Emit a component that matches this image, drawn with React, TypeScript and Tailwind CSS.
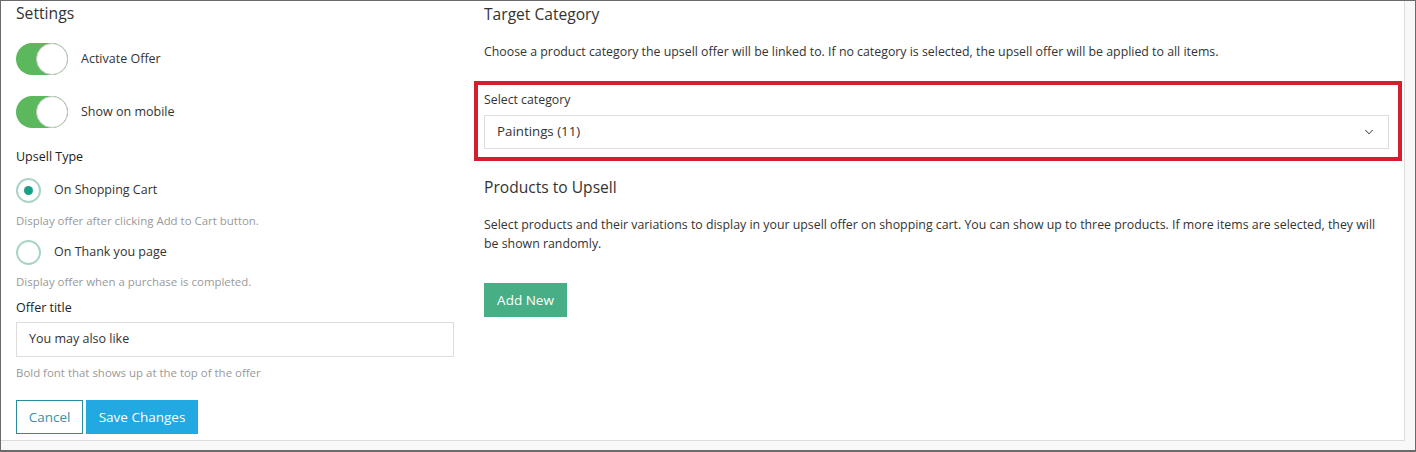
import { ChevronDown } from 'lucide-react';

const font = { fontFamily: '"Open Sans", "Noto Sans", Arial, sans-serif' };

function Toggle({ label }: { label: string }) {
  return (
    <div className="flex h-[32px] items-center">
      <div className="relative h-[32px] w-[52px] rounded-full bg-[#5cb85c]">
        <div className="absolute right-0 top-0 h-[32px] w-[32px] rounded-full border border-[#c8c8c8] bg-white" />
      </div>
      <span className="ml-[13px] text-[12.5px] text-[#333]">{label}</span>
    </div>
  );
}

function Radio({ label, checked }: { label: string; checked?: boolean }) {
  return (
    <div className="flex h-[25px] items-center">
      <div className="flex h-[25px] w-[25px] items-center justify-center rounded-full border-2 border-[#a9d3c8] bg-white">
        {checked && <div className="h-[9px] w-[9px] rounded-full bg-[#17a085]" />}
      </div>
      <span className="ml-[13px] text-[12.5px] text-[#333]">{label}</span>
    </div>
  );
}

export default function App() {
  return (
    <div className="h-[452px] w-[1416px] border border-b-2 border-[#6a6a6a] bg-[#f8f8f8] text-[#333]" style={font}>
      <div className="flex h-[440px] w-[1404px] border-b border-r border-[#dcdcdc] bg-white">
        {/* Settings column */}
        <div className="w-[453px] pl-[15px] pt-[1px]">
          <h2 className="text-[15.7px] leading-[22px] text-[#333]">Settings</h2>
          <div className="mt-[19px] flex flex-col gap-[21px]">
            <Toggle label="Activate Offer" />
            <Toggle label="Show on mobile" />
          </div>
          <div className="mt-[20px] text-[12.5px] leading-[18px] text-[#222]">Upsell Type</div>
          <div className="mt-[12px]">
            <Radio label="On Shopping Cart" checked />
          </div>
          <div className="mt-[10px] text-[11.45px] leading-[16px] text-[#999]">Display offer after clicking Add to Cart button.</div>
          <div className="mt-[11px]">
            <Radio label="On Thank you page" />
          </div>
          <div className="mt-[9px] text-[11.45px] leading-[16px] text-[#999]">Display offer when a purchase is completed.</div>
          <div className="mt-[9px] text-[12.5px] leading-[18px] text-[#222]">Offer title</div>
          <div className="mt-[5px] flex h-[35px] w-[438px] items-center border border-[#ddd] px-[12px] text-[12.5px] text-[#333]">
            You may also like
          </div>
          <div className="mt-[8px] text-[11.45px] leading-[16px] text-[#999]">Bold font that shows up at the top of the offer</div>
          <div className="mt-[19px] flex gap-[3px]">
            <button className="h-[34px] w-[67px] border border-[#2a8aa0] bg-white text-[13.5px] text-[#3a8fa6]">Cancel</button>
            <button className="h-[34px] w-[112px] bg-[#22a9e1] text-[13.5px] text-white">Save Changes</button>
          </div>
        </div>

        {/* Target category column */}
        <div className="flex-1 pl-[20px] pr-[2px] pt-[2px]">
          <h2 className="pl-[10px] text-[15.6px] leading-[22px] text-[#333]">Target Category</h2>
          <p className="mt-[18px] pl-[10px] text-[12.35px] leading-[18px] text-[#333]">
            Choose a product category the upsell offer will be linked to. If no category is selected, the upsell offer will be applied to all items.
          </p>
          <div className="mt-[20px] border-4 border-[#d21f2c] pb-[8px] pl-[6px] pr-[9px] pt-[6px]">
            <div className="text-[12.3px] leading-[18px] text-[#333]">Select category</div>
            <div className="mt-[6px] flex h-[34px] items-center justify-between border border-[#ddd] pl-[12px] pr-[12px] text-[13.3px] text-[#333]">
              <span>Paintings (11)</span>
              <ChevronDown size={14} strokeWidth={1.8} className="text-[#555]" />
            </div>
          </div>
          <h2 className="mt-[15px] pl-[10px] text-[15.6px] leading-[22px] text-[#333]">Products to Upsell</h2>
          <p className="mt-[17px] pl-[10px] pr-[20px] text-[12.35px] leading-[19px] text-[#333]">
            Select products and their variations to display in your upsell offer on shopping cart. You can show up to three products. If more items are selected, they will be shown randomly.
          </p>
          <div className="mt-[30px] pl-[10px]">
            <button className="h-[34px] w-[83px] bg-[#48ae86] text-[13.5px] text-white">Add New</button>
          </div>
        </div>
      </div>
    </div>
  );
}
